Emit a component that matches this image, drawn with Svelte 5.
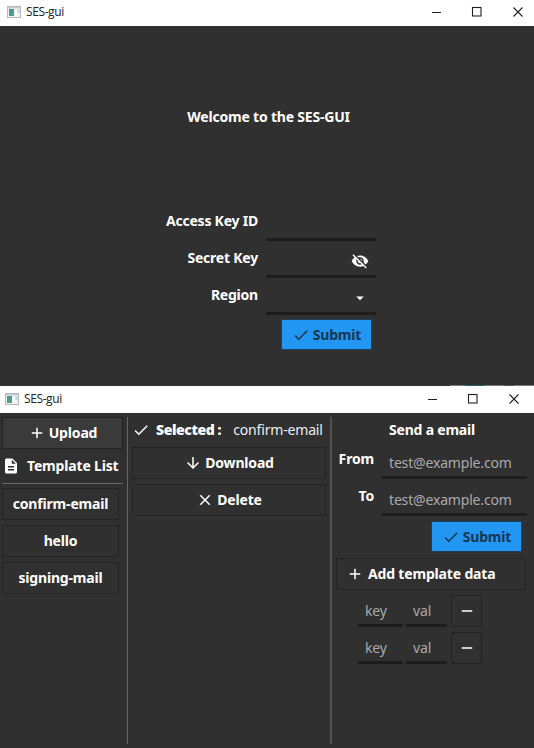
<script>
  const icons = {
    check: 'M9 16.17L4.83 12l-1.42 1.41L9 19 21 7l-1.41-1.41z',
    add: 'M19 13h-6v6h-2v-6H5v-2h6V5h2v6h6v2z',
    remove: 'M19 13H5v-2h14v2z',
    close: 'M19 6.41L17.59 5 12 10.59 6.41 5 5 6.41 10.59 12 5 17.59 6.41 19 12 13.41 17.59 19 19 17.59 13.41 12z',
    down: 'M20 12l-1.41-1.41L13 16.17V4h-2v12.17l-5.58-5.59L4 12l8 8 8-8z',
    drop: 'M7 10l5 5 5-5z',
    doc: 'M14 2H6c-1.1 0-1.99.9-1.99 2L4 20c0 1.1.89 2 1.99 2H18c1.1 0 2-.9 2-2V8l-6-6zm2 16H8v-2h8v2zm0-4H8v-2h8v2zm-3-5V3.5L18.5 9H13z',
    hidden: 'M12 7c2.76 0 5 2.24 5 5 0 .65-.13 1.26-.36 1.83l2.92 2.92c1.51-1.26 2.7-2.89 3.43-4.75-1.73-4.39-6-7.5-11-7.5-1.4 0-2.74.25-3.98.7l2.16 2.16C10.74 7.13 11.35 7 12 7zM2 4.27l2.28 2.28.46.46C3.08 8.3 1.78 10.02 1 12c1.73 4.39 6 7.5 11 7.5 1.55 0 3.03-.3 4.38-.84l.42.42L19.73 22 21 20.73 3.27 3 2 4.27zM7.53 9.8l1.55 1.55c-.05.21-.08.43-.08.65 0 1.66 1.34 3 3 3 .22 0 .44-.03.65-.08l1.55 1.55c-.67.33-1.41.53-2.2.53-2.76 0-5-2.24-5-5 0-.79.2-1.53.53-2.2zm4.31-.78l3.15 3.15.02-.16c0-1.66-1.34-3-3-3l-.17.01z',
  };
  const credentials = [
    { label: 'Access Key ID' },
    { label: 'Secret Key', icon: 'hidden' },
    { label: 'Region', icon: 'drop' },
  ];
  const templates = ['confirm-email', 'hello', 'signing-mail'];
  const addresses = ['From', 'To'];
  const pairs = [1, 2];
</script>

{#snippet icon(name)}
  <svg class="icon" width="18" height="18" viewBox="0 0 24 24"><path d={icons[name]} fill="currentColor" /></svg>
{/snippet}

{#snippet titlebar(kind)}
  <header class="titlebar {kind}">
    <svg class="app-icon" width="14" height="13" viewBox="0 0 14 13">
      <defs>
        <linearGradient id="pane-{kind}" x1="0" y1="0" x2="1" y2="1">
          <stop offset="0" stop-color="#3f8fa0" /><stop offset="1" stop-color="#5fa579" />
        </linearGradient>
      </defs>
      <rect x=".5" y=".5" width="13" height="11" fill="#eef1f1" stroke="#b4babd" />
      <rect x="1" y="1" width="12" height="1.4" fill="#c5cacc" />
      <rect x="2" y="3" width="5" height="7" fill="url(#pane-{kind})" />
      <rect x="8" y="3" width="2" height="7" fill="#fff" />
      <rect x="10.5" y="3" width="2" height="4" fill="#c3d6dc" />
    </svg>
    <span class="title">SES-gui</span>
    <svg class="controls" width="92" height="12" viewBox="0 0 92 12" fill="none" stroke="#222">
      <path d="M0 6.5h9" />
      <rect x="40.5" y="1.5" width="8.5" height="8.5" stroke-width="1.1" />
      <path d="M81.5 1.5l9 9M90.5 1.5l-9 9" stroke-width="1.1" />
    </svg>
  </header>
{/snippet}

<div class="screen">
  <section class="login">
    {@render titlebar('first')}
    <h1>Welcome to the SES-GUI</h1>
    <div class="form">
      {#each credentials as field}
        <div class="row">
          <span class="label">{field.label}</span>
          <div class="field">
            {#if field.icon}{@render icon(field.icon)}{/if}
          </div>
        </div>
      {/each}
    </div>
    <button class="submit">{@render icon('check')}<span>Submit</span></button>
    <div class="strip"></div>
  </section>

  <section class="manager">
    {@render titlebar('second')}
    <div class="columns">
      <div class="left">
        <button class="upload">{@render icon('add')}<span>Upload</span></button>
        <div class="list-head">{@render icon('doc')}<span>Template List</span></div>
        <div class="rule"></div>
        <div class="list">
          {#each templates as name}<button>{name}</button>{/each}
        </div>
      </div>
      <div class="middle">
        <div class="selected">{@render icon('check')}<b>Selected :</b><span>confirm-email</span></div>
        <button>{@render icon('down')}<span>Download</span></button>
        <button>{@render icon('close')}<span>Delete</span></button>
      </div>
      <div class="right">
        <h2>Send a email</h2>
        {#each addresses as name}
          <div class="address">
            <span class="label">{name}</span>
            <div class="field">test@example.com</div>
          </div>
        {/each}
        <button class="submit">{@render icon('check')}<span>Submit</span></button>
        <button class="add">{@render icon('add')}<span>Add template data</span></button>
        {#each pairs as pair (pair)}
          <div class="pair">
            <div class="field key">key</div>
            <div class="field val">val</div>
            <button>{@render icon('remove')}</button>
          </div>
        {/each}
      </div>
    </div>
  </section>
</div>

<style>
  :global(body) { background: #303030; }
  .screen {
    width: 534px; height: 748px; overflow: hidden; background: #303030; color: #fff;
    font: 700 14px/20px "Noto Sans", sans-serif; letter-spacing: -0.17px; white-space: nowrap;
  }
  .screen * { box-sizing: border-box; }
  .icon { flex: none; display: block; }
  h1, h2 { margin: 0; font-size: 14px; line-height: 20px; text-align: center; }

  .titlebar { display: flex; align-items: center; background: #fff; color: #222; }
  .titlebar.first { height: 26px; padding: 0 10px 2px 7px; }
  .titlebar.second { height: 27px; padding: 0 14px 1px 5px; }
  .title { margin-left: 5px; font: 400 12px/16px "Open Sans", sans-serif; letter-spacing: -0.4px; }
  .controls { margin-left: auto; }

  button {
    display: flex; align-items: center; justify-content: center; gap: 3px;
    height: 32px; margin: 0; padding: 0 0 1px; border: 1px solid #232323; background: #303030;
    color: #fff; font: inherit; letter-spacing: inherit;
  }
  .submit { width: 91px; height: 31px; padding: 0; background: #2196f3; border-color: #1f405a; color: #17364f; }
  .field { border-bottom: 3px solid #1d1d1d; }
  .label { text-align: right; }

  .login { display: flex; flex-direction: column; height: 386px; }
  .login h1 { margin-top: 81px; padding-left: 3px; letter-spacing: -0.2px; }
  .form { display: flex; flex-direction: column; gap: 3px; margin-top: 80px; }
  .row { display: flex; gap: 8px; height: 34px; }
  .row .label { width: 258px; padding-top: 4px; letter-spacing: -0.22px; }
  .row .field { display: flex; justify-content: flex-end; width: 110px; padding: 8px 7px 0 0; }
  .login .submit { margin: 4px 0 0 281px; }
  .strip {
    width: 84px; height: 1px; margin: 35px 0 0 auto;
    background: linear-gradient(90deg, #777 0 18%, #286078 18% 42%, #777 42% 64%, #555 64% 76%, #777 76%);
  }

  .manager { display: flex; flex-direction: column; height: 362px; }
  .columns { display: flex; flex: 1; padding: 4px 0; }
  .left { width: 128px; border-right: 1px solid #666; padding: 0 4px 0 2px; }
  .upload { width: 121px; background: #3a3a3a; }
  .list-head { display: flex; align-items: center; gap: 7px; height: 34px; }
  .rule { height: 1px; background: #696969; }
  .list { display: flex; flex-direction: column; gap: 5px; margin-top: 4px; }
  .list button { width: 117px; }
  .middle { display: flex; flex-direction: column; gap: 5px; width: 204px; padding: 0 4px; border-right: 2px solid #505050; }
  .selected { display: flex; align-items: center; height: 25px; }
  .selected b { margin-left: 6px; letter-spacing: -0.4px; }
  .selected span { margin-left: 12px; font-weight: 400; color: #eee; }
  .right { display: flex; flex-direction: column; flex: 1; padding-left: 4px; }
  .right h2 { margin: 3px 0 2px; padding-right: 6px; letter-spacing: -0.2px; }
  .address { display: flex; gap: 8px; height: 37px; }
  .address .label { width: 38px; padding-top: 7px; }
  .address .field { width: 145px; padding: 11px 0 0 7px; font-weight: 400; color: #aaa; }
  .right .submit { margin: 5px 0 0 95px; }
  .add { width: 190px; margin-top: 6px; justify-content: flex-start; padding-left: 9px; gap: 4px; }
  .pair { display: flex; height: 32px; margin: 5px 0 0 22px; }
  .pair .field { padding: 6px 0 0 7px; font-weight: 400; color: #aaa; }
  .key { width: 45px; margin-right: 3px; }
  .val { width: 41px; margin-right: 4px; }
  .pair button { width: 31px; }
</style>
